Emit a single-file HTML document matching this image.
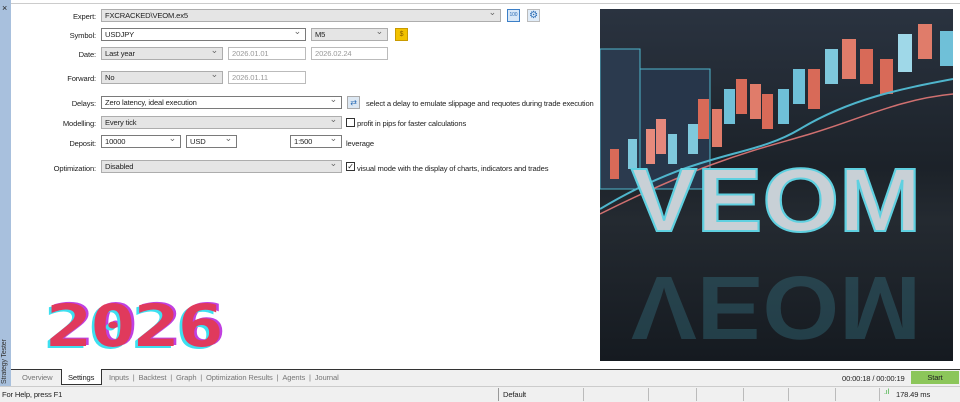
<!DOCTYPE html>
<html><head><meta charset="utf-8"><style>
*{margin:0;padding:0;box-sizing:border-box}
body{width:960px;height:402px;background:#fff;position:relative;overflow:hidden;font-family:"Liberation Sans",Arial,sans-serif;font-size:7.6px;letter-spacing:-0.15px;color:#222}
.a{position:absolute}
.lbl{position:absolute;right:864px;text-align:right;white-space:nowrap}
.f{position:absolute;border:1px solid #adadad;background:#e5e5e5;padding-left:3px;line-height:11px;white-space:nowrap}
.w{background:#fff;border-color:#7a7a7a}
.dis{background:#fff;color:#999;border-color:#bbb}
.dd:after{content:"⌄";position:absolute;right:4px;top:-3px;color:#666;font-size:9px}
.t{position:absolute;white-space:nowrap}
.cb{position:absolute;width:9px;height:9px;border:1px solid #333;background:#fff}
</style></head><body>
<div class="a" style="left:0;top:0;width:960px;height:4px;border-bottom:1px solid #ccc;background:#fff"></div>
<div class="a" style="left:0;top:0;width:11px;height:386px;background:#a8c0dd"></div>
<div class="t" style="left:2px;top:3px;font-size:9px">×</div>
<div class="t" style="left:1px;top:384px;transform:rotate(-90deg);transform-origin:0 0;font-size:7px;color:#333">Strategy Tester</div>

<div class="lbl" style="top:12px">Expert:</div>
<div class="f dd" style="left:101px;top:9px;width:400px;height:13px">FXCRACKED\VEOM.ex5</div>
<div class="a" style="left:507px;top:9px;width:13px;height:13px;border:1px solid #3c7fc7;background:#d7e7f7;font-size:5px;color:#2a6db6;text-align:center;line-height:11px">100</div>
<div class="a" style="left:527px;top:9px;width:13px;height:13px;border:1px solid #bbb;background:#e0ecf8;color:#2a6db6;text-align:center;line-height:11px;font-size:10px">⚙</div>

<div class="lbl" style="top:31px">Symbol:</div>
<div class="f w dd" style="left:101px;top:28px;width:205px;height:13px">USDJPY</div>
<div class="f dd" style="left:311px;top:28px;width:77px;height:13px">M5</div>
<div class="a" style="left:395px;top:28px;width:13px;height:13px;background:#f2c200;border:1px solid #c99a00;color:#8a6000;text-align:center;line-height:11px;font-size:7px">$</div>

<div class="lbl" style="top:50px">Date:</div>
<div class="f dd" style="left:101px;top:47px;width:122px;height:13px">Last year</div>
<div class="f dis" style="left:228px;top:47px;width:78px;height:13px">2026.01.01</div>
<div class="f dis" style="left:311px;top:47px;width:77px;height:13px">2026.02.24</div>

<div class="lbl" style="top:74px">Forward:</div>
<div class="f dd" style="left:101px;top:71px;width:122px;height:13px">No</div>
<div class="f dis" style="left:228px;top:71px;width:78px;height:13px">2026.01.11</div>

<div class="lbl" style="top:99px">Delays:</div>
<div class="f w dd" style="left:101px;top:96px;width:241px;height:13px">Zero latency, ideal execution</div>
<div class="a" style="left:347px;top:96px;width:13px;height:13px;border:1px solid #aaa;background:#dde8f3;color:#2a6db6;font-size:8px;text-align:center;line-height:11px">⇄</div>
<div class="t" style="left:366px;top:99px">select a delay to emulate slippage and requotes during trade execution</div>

<div class="lbl" style="top:119px">Modelling:</div>
<div class="f dd" style="left:101px;top:116px;width:241px;height:13px">Every tick</div>
<div class="cb" style="left:346px;top:118px"></div>
<div class="t" style="left:357px;top:119px">profit in pips for faster calculations</div>

<div class="lbl" style="top:139px">Deposit:</div>
<div class="f w dd" style="left:101px;top:135px;width:80px;height:13px">10000</div>
<div class="f w dd" style="left:186px;top:135px;width:51px;height:13px">USD</div>
<div class="f w dd" style="left:290px;top:135px;width:52px;height:13px">1:500</div>
<div class="t" style="left:346px;top:139px">leverage</div>

<div class="lbl" style="top:164px">Optimization:</div>
<div class="f dd" style="left:101px;top:160px;width:241px;height:13px">Disabled</div>
<div class="cb" style="left:346px;top:162px;font-size:8px;line-height:7px;text-align:center">✓</div>
<div class="t" style="left:357px;top:164px">visual mode with the display of charts, indicators and trades</div>

<div class="t" style="left:46px;top:297px;font-family:'DejaVu Sans Mono',monospace;font-weight:bold;font-size:58px;letter-spacing:-2px;color:#e03a5c;text-shadow:-2px 2px 0 #3de0f0,2px -1px 0 #c040e0;line-height:58px;transform:scale(1.33,1.0);transform-origin:0 0">2026</div>

<svg class="a" style="left:600px;top:9px" width="353" height="352">
<defs><linearGradient id="bg" x1="0" y1="0" x2="0" y2="1"><stop offset="0" stop-color="#2a3340"/><stop offset=".45" stop-color="#1c2229"/><stop offset=".6" stop-color="#242a31"/><stop offset="1" stop-color="#151a20"/></linearGradient></defs>
<rect width="353" height="352" fill="url(#bg)"/>
<rect x="0" y="40" width="40" height="140" fill="#2b3a4e" stroke="#4fb5cc" stroke-width="1"/>
<rect x="40" y="60" width="70" height="120" fill="#27364a" stroke="#4fb5cc" stroke-width="1"/>
<g>
<rect x="10" y="140" width="9" height="30" fill="#d86a58"/><rect x="28" y="130" width="9" height="30" fill="#7fc8dc"/><rect x="46" y="120" width="9" height="35" fill="#e78a7c"/><rect x="56" y="110" width="10" height="35" fill="#e5887c"/><rect x="68" y="125" width="9" height="30" fill="#7fc8dc"/><rect x="88" y="115" width="10" height="30" fill="#7fc8dc"/><rect x="98" y="90" width="11" height="40" fill="#d86a58"/><rect x="112" y="100" width="10" height="38" fill="#e07c6a"/><rect x="124" y="80" width="11" height="35" fill="#6fc0d8"/><rect x="136" y="70" width="11" height="35" fill="#d86a58"/><rect x="150" y="75" width="11" height="35" fill="#e07c6a"/><rect x="162" y="85" width="11" height="35" fill="#d86a58"/><rect x="178" y="80" width="11" height="35" fill="#6fc0d8"/><rect x="193" y="60" width="12" height="35" fill="#6fc0d8"/><rect x="208" y="60" width="12" height="40" fill="#d86a58"/><rect x="225" y="40" width="13" height="35" fill="#7fc8dc"/><rect x="242" y="30" width="14" height="40" fill="#e07c6a"/><rect x="260" y="40" width="13" height="35" fill="#d86a58"/><rect x="280" y="50" width="13" height="35" fill="#d86a58"/><rect x="298" y="25" width="14" height="38" fill="#9fd8e8"/><rect x="318" y="15" width="14" height="35" fill="#e07c6a"/><rect x="340" y="22" width="13" height="35" fill="#6fc0d8"/>
</g>
<path d="M0 200 C100 140 150 150 200 120 S300 80 353 70" stroke="#4fb5cc" stroke-width="2" fill="none"/>
<path d="M0 205 C110 150 160 140 210 125 S300 90 353 85" stroke="#d07070" stroke-width="1.5" fill="none"/>
<text x="176" y="222" text-anchor="middle" font-family="Liberation Sans,sans-serif" font-weight="bold" font-size="90" fill="#c8d0d6" stroke="#5fd0e0" stroke-width="2" textLength="290" lengthAdjust="spacingAndGlyphs">VEOM</text>
<text x="176" y="262" text-anchor="middle" transform="scale(1,-1) translate(0,-530)" font-family="Liberation Sans,sans-serif" font-weight="bold" font-size="90" fill="#3a7f90" opacity=".35" textLength="290" lengthAdjust="spacingAndGlyphs">VEOM</text>
</svg>

<div class="a" style="left:11px;top:369px;width:949px;height:17px;background:#f0f0f0;border-top:1px solid #333"></div>
<div class="t" style="left:22px;top:373px;color:#777">Overview</div>
<div class="a" style="left:61px;top:369px;width:41px;height:16px;background:#fff;border:1px solid #333;border-top:none"></div>
<div class="t" style="left:68px;top:373px">Settings</div>
<div class="t" style="left:109px;top:373px;color:#777">Inputs &nbsp;| &nbsp;Backtest &nbsp;| &nbsp;Graph &nbsp;| &nbsp;Optimization Results &nbsp;| &nbsp;Agents &nbsp;| &nbsp;Journal</div>
<div class="t" style="left:842px;top:374px">00:00:18 / 00:00:19</div>
<div class="a" style="left:911px;top:371px;width:48px;height:13px;background:#8cc65a;text-align:center;line-height:13px;color:#222">Start</div>
<div class="a" style="left:0;top:386px;width:960px;height:16px;background:#f0f0f0;border-top:1px solid #ccc"></div>
<div class="t" style="left:2px;top:390px">For Help, press F1</div>
<div class="a" style="left:498px;top:388px;width:1px;height:13px;background:#999"></div>
<div class="t" style="left:503px;top:390px">Default</div>
<div class="a" style="left:583px;top:388px;width:1px;height:13px;background:#bbb"></div>
<div class="a" style="left:648px;top:388px;width:1px;height:13px;background:#bbb"></div>
<div class="a" style="left:696px;top:388px;width:1px;height:13px;background:#bbb"></div>
<div class="a" style="left:743px;top:388px;width:1px;height:13px;background:#bbb"></div>
<div class="a" style="left:788px;top:388px;width:1px;height:13px;background:#bbb"></div>
<div class="a" style="left:835px;top:388px;width:1px;height:13px;background:#bbb"></div>
<div class="a" style="left:879px;top:388px;width:1px;height:13px;background:#bbb"></div>
<div class="t" style="left:884px;top:389px;color:#3a3;font-size:7px">.ıl</div>
<div class="t" style="left:896px;top:390px">178.49 ms</div>
</body></html>
